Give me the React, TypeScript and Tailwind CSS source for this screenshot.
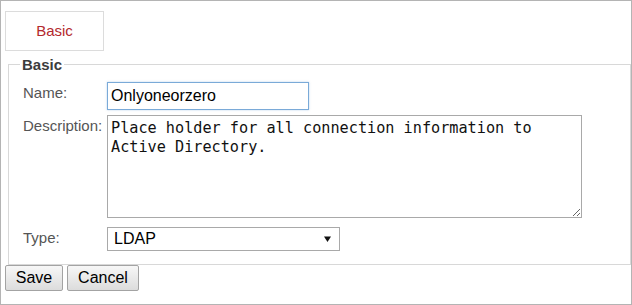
import { useState } from 'react'

function Label({ children }: { children: string }) {
  return <div className="pt-[2px] text-[15px] leading-[17px] text-[#555]">{children}</div>
}

export default function App() {
  const [name, setName] = useState('Onlyoneorzero')
  const [desc, setDesc] = useState(
    'Place holder for all connection information to Active Directory.'
  )

  return (
    <div className="h-[305px] w-[632px] overflow-hidden border border-[#b4b4b4] bg-white font-['Liberation_Sans',Arial,sans-serif] text-black">
      <div className="ml-[4px] mt-[10px] flex h-[40px] w-[99px] items-center justify-center border border-[#dcdcdc] text-[15px] text-[#b3282d]">
        Basic
      </div>

      <fieldset className="ml-[7px] mt-[5px] w-[623px] border border-[#d8d8d8] pb-[13px]">
        <legend className="ml-[11px] px-[2px] text-[15px] font-bold leading-[17px] text-[#3c3c3c]">
          Basic
        </legend>

        <div className="mt-[9px] grid grid-cols-[84px_auto] items-start pl-[14px]">
          <Label>Name:</Label>
          <input
            value={name}
            onChange={(e) => setName(e.target.value)}
            className="h-[28px] w-[202px] border border-[#7aaad8] px-[3px] text-[16px] text-black shadow-[0_0_2px_rgba(122,170,216,0.5)] outline-none"
          />

          <div className="mt-[5px]">
            <Label>Description:</Label>
          </div>
          <textarea
            value={desc}
            onChange={(e) => setDesc(e.target.value)}
            className="mt-[5px] block h-[103px] w-[475px] border border-[#a9a9a9] px-[3px] pt-[3px] font-['DejaVu_Sans_Mono',monospace] text-[15.2px] leading-[19px] text-[#111] outline-none"
          />

          <div className="mt-[9px]">
            <Label>Type:</Label>
          </div>
          <div className="mt-[9px] flex h-[24px] w-[233px] items-center justify-between border border-[#a9a9a9] bg-white pl-[6px] pr-[8px] text-[16px]">
            <span>LDAP</span>
            <svg width="7" height="6" viewBox="0 0 7 6">
              <path d="M0 0.5h7L3.5 6z" fill="#111" />
            </svg>
          </div>
        </div>
      </fieldset>

      <div className="ml-[4px] flex gap-[4px]">
        {['Save', 'Cancel'].map((label) => (
          <button
            key={label}
            className={
              'h-[26px] rounded-[2px] border border-[#a3a3a3] bg-gradient-to-b from-[#f7f7f7] to-[#dcdcdc] text-[16px] text-black ' +
              (label === 'Save' ? 'w-[58px]' : 'w-[72px]')
            }
          >
            {label}
          </button>
        ))}
      </div>
    </div>
  )
}
